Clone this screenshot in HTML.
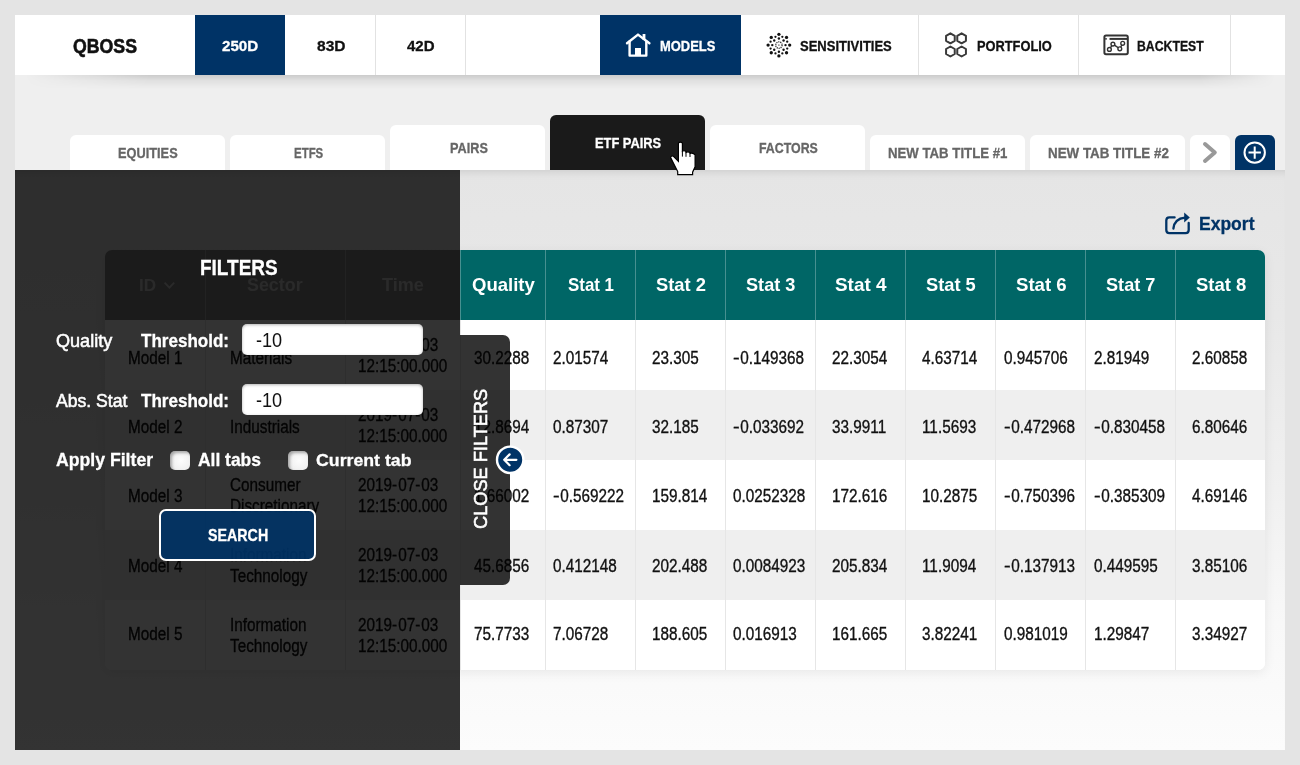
<!DOCTYPE html>
<html><head><meta charset="utf-8"><title>QBOSS</title>
<style>
html,body{margin:0;padding:0;}
body{width:1300px;height:765px;overflow:hidden;background:#e4e4e4;position:relative;font-family:"Liberation Sans",sans-serif;}
.b{position:absolute;}
.t{position:absolute;white-space:pre;transform-origin:0 0;font-family:"Liberation Sans",sans-serif;}
</style></head><body>
<div class="b" style="left:15px;top:15px;width:1270px;height:735px;background:#efefef;"></div>
<div class="b" style="left:15px;top:170px;width:1270px;height:580px;background:linear-gradient(to bottom,#e5e5e5 0%,#e8e8e8 25%,#f0f0f0 55%,#f8f8f8 78%,#fcfcfc 100%);box-shadow:inset 0 9px 10px -8px rgba(0,0,0,0.13);"></div>
<div class="b" style="left:25px;top:75px;width:1255px;height:14px;background:linear-gradient(to bottom,rgba(0,0,0,0.15),rgba(0,0,0,0.06) 40%,rgba(0,0,0,0));-webkit-mask-image:linear-gradient(to right,transparent 0,#000 125px,#000 1175px,transparent 1250px);"></div>
<div class="b" style="left:15px;top:15px;width:1270px;height:60px;background:#fff;"></div>
<div class="b" style="left:375px;top:15px;width:1px;height:60px;background:#e2e2e2;"></div>
<div class="b" style="left:465px;top:15px;width:1px;height:60px;background:#e2e2e2;"></div>
<div class="b" style="left:918px;top:15px;width:1px;height:60px;background:#e2e2e2;"></div>
<div class="b" style="left:1078px;top:15px;width:1px;height:60px;background:#e2e2e2;"></div>
<div class="b" style="left:1230px;top:15px;width:1px;height:60px;background:#e2e2e2;"></div>
<div class="b" style="left:195px;top:15px;width:90px;height:60px;background:#003366;"></div>
<div class="b" style="left:600px;top:15px;width:141px;height:60px;background:#003366;"></div>
<span class="t" style="left:73.30px;top:36px;font-size:20.20px;line-height:20.20px;font-weight:bold;-webkit-text-stroke:0.3px #111;color:#111;transform:scaleX(0.8770);-webkit-text-stroke:0.6px #111;">QBOSS</span>
<span class="t" style="left:222.20px;top:38px;font-size:15.12px;line-height:15.12px;font-weight:bold;-webkit-text-stroke:0.3px #fff;color:#fff;transform:scaleX(1.0016);">250D</span>
<span class="t" style="left:316.50px;top:38px;font-size:15.12px;line-height:15.12px;font-weight:bold;-webkit-text-stroke:0.3px #111;color:#111;transform:scaleX(1.0280);">83D</span>
<span class="t" style="left:406.80px;top:38px;font-size:15.12px;line-height:15.12px;font-weight:bold;-webkit-text-stroke:0.3px #111;color:#111;transform:scaleX(0.9956);">42D</span>
<span class="t" style="left:659.60px;top:39px;font-size:14.53px;line-height:14.53px;font-weight:bold;-webkit-text-stroke:0.3px #fff;color:#fff;transform:scaleX(0.8910);">MODELS</span>
<span class="t" style="left:800.00px;top:39px;font-size:14.53px;line-height:14.53px;font-weight:bold;-webkit-text-stroke:0.3px #111;color:#111;transform:scaleX(0.8960);">SENSITIVITIES</span>
<span class="t" style="left:977.40px;top:39px;font-size:14.53px;line-height:14.53px;font-weight:bold;-webkit-text-stroke:0.3px #111;color:#111;transform:scaleX(0.8834);">PORTFOLIO</span>
<span class="t" style="left:1137.00px;top:39px;font-size:14.53px;line-height:14.53px;font-weight:bold;-webkit-text-stroke:0.3px #111;color:#111;transform:scaleX(0.8442);">BACKTEST</span>
<svg class="b" style="left:620px;top:28px" width="40" height="34" viewBox="620 28 40 34">
<g fill="none" stroke="#fff" stroke-width="2.4" stroke-linejoin="round" stroke-linecap="round">
<path d="M627 43.2 L638 34.6 L649.4 43.2"/>
<path d="M629.6 41.5 V55.6 H646.3 V41.5"/>
</g>
<rect x="635" y="48" width="6" height="8" fill="#fff"/>
<rect x="642.6" y="34" width="2.8" height="6" fill="#fff"/>
</svg>
<svg class="b" style="left:760px;top:28px" width="38" height="36" viewBox="760 28 38 36"><g fill="#111"><circle cx="778.90" cy="34.30" r="1.65"/><circle cx="782.34" cy="36.79" r="1.15"/><circle cx="778.90" cy="38.50" r="1.20"/><circle cx="786.54" cy="37.46" r="1.65"/><circle cx="787.21" cy="41.66" r="1.15"/><circle cx="783.57" cy="40.43" r="1.20"/><circle cx="789.70" cy="45.10" r="1.65"/><circle cx="787.21" cy="48.54" r="1.15"/><circle cx="785.50" cy="45.10" r="1.20"/><circle cx="786.54" cy="52.74" r="1.65"/><circle cx="782.34" cy="53.41" r="1.15"/><circle cx="783.57" cy="49.77" r="1.20"/><circle cx="778.90" cy="55.90" r="1.65"/><circle cx="775.46" cy="53.41" r="1.15"/><circle cx="778.90" cy="51.70" r="1.20"/><circle cx="771.26" cy="52.74" r="1.65"/><circle cx="770.59" cy="48.54" r="1.15"/><circle cx="774.23" cy="49.77" r="1.20"/><circle cx="768.10" cy="45.10" r="1.65"/><circle cx="770.59" cy="41.66" r="1.15"/><circle cx="772.30" cy="45.10" r="1.20"/><circle cx="771.26" cy="37.46" r="1.65"/><circle cx="775.46" cy="36.79" r="1.15"/><circle cx="774.23" cy="40.43" r="1.20"/></g><circle cx="778.9" cy="45.1" r="3.2" fill="none" stroke="#333" stroke-width="1.3" stroke-dasharray="1.2 0.8"/><circle cx="778.9" cy="45.1" r="0.9" fill="#888"/></svg>
<svg class="b" style="left:938px;top:28px" width="34" height="34" viewBox="938 28 34 34"><g fill="none" stroke="#3a3a3a" stroke-width="2" stroke-linejoin="round"><polygon points="950.40,33.30 954.73,35.80 954.73,40.80 950.40,43.30 946.07,40.80 946.07,35.80"/><polygon points="950.40,46.50 954.73,49.00 954.73,54.00 950.40,56.50 946.07,54.00 946.07,49.00"/><polygon points="961.60,33.30 965.93,35.80 965.93,40.80 961.60,43.30 957.27,40.80 957.27,35.80"/><polygon points="961.60,46.50 965.93,49.00 965.93,54.00 961.60,56.50 957.27,54.00 957.27,49.00"/></g></svg>
<svg class="b" style="left:1100px;top:30px" width="34" height="30" viewBox="1100 30 34 30">
<g fill="none" stroke="#333" stroke-width="2">
<rect x="1104.4" y="35.6" width="23.4" height="18.6" rx="1.6"/>
<path d="M1109.5 38.9 H1127"/>
<path d="M1109.4 49.4 L1112.9 44.1 L1119.8 48.8 L1122.7 43.3" stroke-width="1.4"/>
</g>
<path d="M1105 38.9 H1107" stroke="#333" stroke-width="1.4"/>
<g fill="#fff" stroke="#333" stroke-width="1.4">
<circle cx="1109.4" cy="49.4" r="1.9"/><circle cx="1112.9" cy="44.1" r="1.9"/><circle cx="1119.8" cy="48.8" r="1.9"/><circle cx="1122.7" cy="43.3" r="1.9"/>
</g>
</svg>
<div class="b" style="left:70px;top:135px;width:155px;height:35px;background:#fff;border-radius:6px 6px 0 0;"></div>
<span class="t" style="left:118.00px;top:146px;font-size:14.24px;line-height:14.24px;font-weight:bold;-webkit-text-stroke:0.3px #666;color:#666;transform:scaleX(0.8979);">EQUITIES</span>
<div class="b" style="left:230px;top:135px;width:155px;height:35px;background:#fff;border-radius:6px 6px 0 0;"></div>
<span class="t" style="left:293.80px;top:147px;font-size:13.95px;line-height:13.95px;font-weight:bold;-webkit-text-stroke:0.3px #666;color:#666;transform:scaleX(0.8215);">ETFS</span>
<div class="b" style="left:390px;top:125px;width:155px;height:45px;background:#fff;border-radius:6px 6px 0 0;"></div>
<span class="t" style="left:449.50px;top:141px;font-size:14.53px;line-height:14.53px;font-weight:bold;-webkit-text-stroke:0.3px #666;color:#666;transform:scaleX(0.8744);">PAIRS</span>
<div class="b" style="left:550px;top:115px;width:155px;height:55px;background:#1a1a1a;border-radius:6px 6px 0 0;"></div>
<span class="t" style="left:595.40px;top:136px;font-size:14.53px;line-height:14.53px;font-weight:bold;-webkit-text-stroke:0.3px #fff;color:#fff;transform:scaleX(0.8847);">ETF PAIRS</span>
<div class="b" style="left:710px;top:125px;width:155px;height:45px;background:#fff;border-radius:6px 6px 0 0;"></div>
<span class="t" style="left:759.10px;top:141px;font-size:14.39px;line-height:14.39px;font-weight:bold;-webkit-text-stroke:0.3px #666;color:#666;transform:scaleX(0.8599);">FACTORS</span>
<div class="b" style="left:870px;top:135px;width:155px;height:35px;background:#fff;border-radius:6px 6px 0 0;"></div>
<span class="t" style="left:888.10px;top:146px;font-size:14.39px;line-height:14.39px;font-weight:bold;-webkit-text-stroke:0.3px #666;color:#666;transform:scaleX(0.9190);">NEW TAB TITLE #1</span>
<div class="b" style="left:1030px;top:135px;width:155px;height:35px;background:#fff;border-radius:6px 6px 0 0;"></div>
<span class="t" style="left:1048.00px;top:146px;font-size:14.53px;line-height:14.53px;font-weight:bold;-webkit-text-stroke:0.3px #666;color:#666;transform:scaleX(0.9212);">NEW TAB TITLE #2</span>
<div class="b" style="left:1190px;top:135px;width:40px;height:35px;background:#fff;border-radius:6px 6px 0 0;"></div>
<svg class="b" style="left:1195px;top:138px" width="30" height="30" viewBox="1195 138 30 30"><path d="M1205 144 L1214.8 152.5 L1205 161" fill="none" stroke="#999" stroke-width="4" stroke-linejoin="round" stroke-linecap="round"/></svg>
<div class="b" style="left:1235px;top:135px;width:40px;height:35px;background:#003366;border-radius:6px 6px 0 0;"></div>
<svg class="b" style="left:1235px;top:135px" width="40" height="35" viewBox="1235 135 40 35"><g fill="none" stroke="#fff" stroke-width="2"><circle cx="1254.7" cy="152.6" r="10.2"/><path d="M1248.5 152.6 H1260.9 M1254.7 146.4 V158.8"/></g></svg>
<svg class="b" style="left:1160px;top:208px" width="35" height="32" viewBox="1160 208 35 32">
<g fill="none" stroke="#003366" stroke-width="2.3" stroke-linecap="round">
<path d="M1174.6 217.4 H1169.4 Q1166.3 217.4 1166.3 220.5 V230 Q1166.3 233.1 1169.4 233.1 H1185.6 Q1188.7 233.1 1188.7 230 V223"/>
<path d="M1173.4 228.5 Q1174.5 218.5 1185 217.6"/>
</g>
<path d="M1184.2 212.6 L1189.8 217.6 L1184.2 222.4 Z" fill="#003366"/>
</svg>
<span class="t" style="left:1198.50px;top:215px;font-size:18.17px;line-height:18.17px;font-weight:bold;-webkit-text-stroke:0.3px #003366;color:#003366;transform:scaleX(0.9645);">Export</span>
<div class="b" style="left:105px;top:250px;width:1160px;height:420px;background:#fff;border-radius:7px;box-shadow:0 3px 12px rgba(0,0,0,0.07);overflow:hidden;"></div>
<div class="b" style="left:105px;top:250px;width:355px;height:70px;background:#878787;border-radius:7px 0 0 0;"></div>
<div class="b" style="left:460px;top:250px;width:805px;height:70px;background:#006666;border-radius:0 7px 0 0;"></div>
<div class="b" style="left:105px;top:390px;width:1160px;height:70px;background:#efefef;"></div>
<div class="b" style="left:105px;top:530px;width:1160px;height:70px;background:#efefef;"></div>
<div class="b" style="left:105px;top:600px;width:1160px;height:70px;background:#fff;border-radius:0 0 7px 7px;"></div>
<div class="b" style="left:205px;top:250px;width:1px;height:70px;background:rgba(255,255,255,0.28);"></div>
<div class="b" style="left:205px;top:320px;width:1px;height:350px;background:#e6e6e6;"></div>
<div class="b" style="left:345px;top:250px;width:1px;height:70px;background:rgba(255,255,255,0.28);"></div>
<div class="b" style="left:345px;top:320px;width:1px;height:350px;background:#e6e6e6;"></div>
<div class="b" style="left:460px;top:250px;width:1px;height:70px;background:rgba(255,255,255,0.28);"></div>
<div class="b" style="left:460px;top:320px;width:1px;height:350px;background:#e6e6e6;"></div>
<div class="b" style="left:545px;top:250px;width:1px;height:70px;background:rgba(255,255,255,0.28);"></div>
<div class="b" style="left:545px;top:320px;width:1px;height:350px;background:#e6e6e6;"></div>
<div class="b" style="left:635px;top:250px;width:1px;height:70px;background:rgba(255,255,255,0.28);"></div>
<div class="b" style="left:635px;top:320px;width:1px;height:350px;background:#e6e6e6;"></div>
<div class="b" style="left:725px;top:250px;width:1px;height:70px;background:rgba(255,255,255,0.28);"></div>
<div class="b" style="left:725px;top:320px;width:1px;height:350px;background:#e6e6e6;"></div>
<div class="b" style="left:815px;top:250px;width:1px;height:70px;background:rgba(255,255,255,0.28);"></div>
<div class="b" style="left:815px;top:320px;width:1px;height:350px;background:#e6e6e6;"></div>
<div class="b" style="left:905px;top:250px;width:1px;height:70px;background:rgba(255,255,255,0.28);"></div>
<div class="b" style="left:905px;top:320px;width:1px;height:350px;background:#e6e6e6;"></div>
<div class="b" style="left:995px;top:250px;width:1px;height:70px;background:rgba(255,255,255,0.28);"></div>
<div class="b" style="left:995px;top:320px;width:1px;height:350px;background:#e6e6e6;"></div>
<div class="b" style="left:1085px;top:250px;width:1px;height:70px;background:rgba(255,255,255,0.28);"></div>
<div class="b" style="left:1085px;top:320px;width:1px;height:350px;background:#e6e6e6;"></div>
<div class="b" style="left:1175px;top:250px;width:1px;height:70px;background:rgba(255,255,255,0.28);"></div>
<div class="b" style="left:1175px;top:320px;width:1px;height:350px;background:#e6e6e6;"></div>
<span class="t" style="left:138.80px;top:277px;font-size:17.01px;line-height:17.01px;font-weight:bold;color:#d0d0d0;transform:scaleX(1.0055);">ID</span>
<svg class="b" style="left:160px;top:278px" width="18" height="14" viewBox="160 278 18 14"><path d="M164.6 282.6 L169.4 287.6 L174.2 282.6" fill="none" stroke="#d0d0d0" stroke-width="1.8"/></svg>
<span class="t" style="left:247.30px;top:277px;font-size:17.59px;line-height:17.59px;font-weight:bold;color:#d0d0d0;transform:scaleX(1.0159);">Sector</span>
<span class="t" style="left:381.50px;top:277px;font-size:17.59px;line-height:17.59px;font-weight:bold;color:#d0d0d0;transform:scaleX(1.0262);">Time</span>
<span class="t" style="left:471.80px;top:277px;font-size:17.59px;line-height:17.59px;font-weight:bold;color:#fff;transform:scaleX(1.0550);">Quality</span>
<span class="t" style="left:568.00px;top:277px;font-size:17.59px;line-height:17.59px;font-weight:bold;color:#fff;transform:scaleX(0.9605);">Stat 1</span>
<span class="t" style="left:656.00px;top:277px;font-size:17.59px;line-height:17.59px;font-weight:bold;color:#fff;transform:scaleX(1.0441);">Stat 2</span>
<span class="t" style="left:746.00px;top:277px;font-size:17.59px;line-height:17.59px;font-weight:bold;color:#fff;transform:scaleX(1.0315);">Stat 3</span>
<span class="t" style="left:835.30px;top:277px;font-size:17.59px;line-height:17.59px;font-weight:bold;color:#fff;transform:scaleX(1.0754);">Stat 4</span>
<span class="t" style="left:926.20px;top:277px;font-size:17.59px;line-height:17.59px;font-weight:bold;color:#fff;transform:scaleX(1.0399);">Stat 5</span>
<span class="t" style="left:1015.70px;top:277px;font-size:17.59px;line-height:17.59px;font-weight:bold;color:#fff;transform:scaleX(1.0587);">Stat 6</span>
<span class="t" style="left:1106.20px;top:277px;font-size:17.59px;line-height:17.59px;font-weight:bold;color:#fff;transform:scaleX(1.0315);">Stat 7</span>
<span class="t" style="left:1195.70px;top:277px;font-size:17.59px;line-height:17.59px;font-weight:bold;color:#fff;transform:scaleX(1.0503);">Stat 8</span>
<span class="t" style="left:473.80px;top:349px;font-size:18.0px;line-height:18.0px;color:#111;-webkit-text-stroke:0.35px #111;transform:scaleX(0.850)">30.2288</span>
<span class="t" style="left:553.30px;top:349px;font-size:18.0px;line-height:18.0px;color:#111;-webkit-text-stroke:0.35px #111;transform:scaleX(0.850)">2.01574</span>
<span class="t" style="left:652.00px;top:349px;font-size:18.0px;line-height:18.0px;color:#111;-webkit-text-stroke:0.35px #111;transform:scaleX(0.850)">23.305</span>
<span class="t" style="left:733.00px;top:349px;font-size:18.0px;line-height:18.0px;color:#111;-webkit-text-stroke:0.35px #111;transform:scaleX(0.850)"><span style="display:inline-block;width:8.5px;transform:scaleX(1.3);transform-origin:0 0">-</span>0.149368</span>
<span class="t" style="left:831.80px;top:349px;font-size:18.0px;line-height:18.0px;color:#111;-webkit-text-stroke:0.35px #111;transform:scaleX(0.850)">22.3054</span>
<span class="t" style="left:921.60px;top:349px;font-size:18.0px;line-height:18.0px;color:#111;-webkit-text-stroke:0.35px #111;transform:scaleX(0.850)">4.63714</span>
<span class="t" style="left:1003.60px;top:349px;font-size:18.0px;line-height:18.0px;color:#111;-webkit-text-stroke:0.35px #111;transform:scaleX(0.850)">0.945706</span>
<span class="t" style="left:1094.00px;top:349px;font-size:18.0px;line-height:18.0px;color:#111;-webkit-text-stroke:0.35px #111;transform:scaleX(0.850)">2.81949</span>
<span class="t" style="left:1192.00px;top:349px;font-size:18.0px;line-height:18.0px;color:#111;-webkit-text-stroke:0.35px #111;transform:scaleX(0.850)">2.60858</span>
<span class="t" style="left:473.80px;top:418px;font-size:18.0px;line-height:18.0px;color:#111;-webkit-text-stroke:0.35px #111;transform:scaleX(0.850)">12.8694</span>
<span class="t" style="left:553.30px;top:418px;font-size:18.0px;line-height:18.0px;color:#111;-webkit-text-stroke:0.35px #111;transform:scaleX(0.850)">0.87307</span>
<span class="t" style="left:652.00px;top:418px;font-size:18.0px;line-height:18.0px;color:#111;-webkit-text-stroke:0.35px #111;transform:scaleX(0.850)">32.185</span>
<span class="t" style="left:733.00px;top:418px;font-size:18.0px;line-height:18.0px;color:#111;-webkit-text-stroke:0.35px #111;transform:scaleX(0.850)"><span style="display:inline-block;width:8.5px;transform:scaleX(1.3);transform-origin:0 0">-</span>0.033692</span>
<span class="t" style="left:831.80px;top:418px;font-size:18.0px;line-height:18.0px;color:#111;-webkit-text-stroke:0.35px #111;transform:scaleX(0.850)">33.9911</span>
<span class="t" style="left:921.60px;top:418px;font-size:18.0px;line-height:18.0px;color:#111;-webkit-text-stroke:0.35px #111;transform:scaleX(0.850)">11.5693</span>
<span class="t" style="left:1003.60px;top:418px;font-size:18.0px;line-height:18.0px;color:#111;-webkit-text-stroke:0.35px #111;transform:scaleX(0.850)"><span style="display:inline-block;width:8.5px;transform:scaleX(1.3);transform-origin:0 0">-</span>0.472968</span>
<span class="t" style="left:1094.00px;top:418px;font-size:18.0px;line-height:18.0px;color:#111;-webkit-text-stroke:0.35px #111;transform:scaleX(0.850)"><span style="display:inline-block;width:8.5px;transform:scaleX(1.3);transform-origin:0 0">-</span>0.830458</span>
<span class="t" style="left:1192.00px;top:418px;font-size:18.0px;line-height:18.0px;color:#111;-webkit-text-stroke:0.35px #111;transform:scaleX(0.850)">6.80646</span>
<span class="t" style="left:473.80px;top:487px;font-size:18.0px;line-height:18.0px;color:#111;-webkit-text-stroke:0.35px #111;transform:scaleX(0.850)">1.66002</span>
<span class="t" style="left:553.30px;top:487px;font-size:18.0px;line-height:18.0px;color:#111;-webkit-text-stroke:0.35px #111;transform:scaleX(0.850)"><span style="display:inline-block;width:8.5px;transform:scaleX(1.3);transform-origin:0 0">-</span>0.569222</span>
<span class="t" style="left:652.00px;top:487px;font-size:18.0px;line-height:18.0px;color:#111;-webkit-text-stroke:0.35px #111;transform:scaleX(0.850)">159.814</span>
<span class="t" style="left:733.00px;top:487px;font-size:18.0px;line-height:18.0px;color:#111;-webkit-text-stroke:0.35px #111;transform:scaleX(0.850)">0.0252328</span>
<span class="t" style="left:831.80px;top:487px;font-size:18.0px;line-height:18.0px;color:#111;-webkit-text-stroke:0.35px #111;transform:scaleX(0.850)">172.616</span>
<span class="t" style="left:921.60px;top:487px;font-size:18.0px;line-height:18.0px;color:#111;-webkit-text-stroke:0.35px #111;transform:scaleX(0.850)">10.2875</span>
<span class="t" style="left:1003.60px;top:487px;font-size:18.0px;line-height:18.0px;color:#111;-webkit-text-stroke:0.35px #111;transform:scaleX(0.850)"><span style="display:inline-block;width:8.5px;transform:scaleX(1.3);transform-origin:0 0">-</span>0.750396</span>
<span class="t" style="left:1094.00px;top:487px;font-size:18.0px;line-height:18.0px;color:#111;-webkit-text-stroke:0.35px #111;transform:scaleX(0.850)"><span style="display:inline-block;width:8.5px;transform:scaleX(1.3);transform-origin:0 0">-</span>0.385309</span>
<span class="t" style="left:1192.00px;top:487px;font-size:18.0px;line-height:18.0px;color:#111;-webkit-text-stroke:0.35px #111;transform:scaleX(0.850)">4.69146</span>
<span class="t" style="left:473.80px;top:557px;font-size:18.0px;line-height:18.0px;color:#111;-webkit-text-stroke:0.35px #111;transform:scaleX(0.850)">45.6856</span>
<span class="t" style="left:553.30px;top:557px;font-size:18.0px;line-height:18.0px;color:#111;-webkit-text-stroke:0.35px #111;transform:scaleX(0.850)">0.412148</span>
<span class="t" style="left:652.00px;top:557px;font-size:18.0px;line-height:18.0px;color:#111;-webkit-text-stroke:0.35px #111;transform:scaleX(0.850)">202.488</span>
<span class="t" style="left:733.00px;top:557px;font-size:18.0px;line-height:18.0px;color:#111;-webkit-text-stroke:0.35px #111;transform:scaleX(0.850)">0.0084923</span>
<span class="t" style="left:831.80px;top:557px;font-size:18.0px;line-height:18.0px;color:#111;-webkit-text-stroke:0.35px #111;transform:scaleX(0.850)">205.834</span>
<span class="t" style="left:921.60px;top:557px;font-size:18.0px;line-height:18.0px;color:#111;-webkit-text-stroke:0.35px #111;transform:scaleX(0.850)">11.9094</span>
<span class="t" style="left:1003.60px;top:557px;font-size:18.0px;line-height:18.0px;color:#111;-webkit-text-stroke:0.35px #111;transform:scaleX(0.850)"><span style="display:inline-block;width:8.5px;transform:scaleX(1.3);transform-origin:0 0">-</span>0.137913</span>
<span class="t" style="left:1094.00px;top:557px;font-size:18.0px;line-height:18.0px;color:#111;-webkit-text-stroke:0.35px #111;transform:scaleX(0.850)">0.449595</span>
<span class="t" style="left:1192.00px;top:557px;font-size:18.0px;line-height:18.0px;color:#111;-webkit-text-stroke:0.35px #111;transform:scaleX(0.850)">3.85106</span>
<span class="t" style="left:473.80px;top:625px;font-size:18.0px;line-height:18.0px;color:#111;-webkit-text-stroke:0.35px #111;transform:scaleX(0.850)">75.7733</span>
<span class="t" style="left:553.30px;top:625px;font-size:18.0px;line-height:18.0px;color:#111;-webkit-text-stroke:0.35px #111;transform:scaleX(0.850)">7.06728</span>
<span class="t" style="left:652.00px;top:625px;font-size:18.0px;line-height:18.0px;color:#111;-webkit-text-stroke:0.35px #111;transform:scaleX(0.850)">188.605</span>
<span class="t" style="left:733.00px;top:625px;font-size:18.0px;line-height:18.0px;color:#111;-webkit-text-stroke:0.35px #111;transform:scaleX(0.850)">0.016913</span>
<span class="t" style="left:831.80px;top:625px;font-size:18.0px;line-height:18.0px;color:#111;-webkit-text-stroke:0.35px #111;transform:scaleX(0.850)">161.665</span>
<span class="t" style="left:921.60px;top:625px;font-size:18.0px;line-height:18.0px;color:#111;-webkit-text-stroke:0.35px #111;transform:scaleX(0.850)">3.82241</span>
<span class="t" style="left:1003.60px;top:625px;font-size:18.0px;line-height:18.0px;color:#111;-webkit-text-stroke:0.35px #111;transform:scaleX(0.850)">0.981019</span>
<span class="t" style="left:1094.00px;top:625px;font-size:18.0px;line-height:18.0px;color:#111;-webkit-text-stroke:0.35px #111;transform:scaleX(0.850)">1.29847</span>
<span class="t" style="left:1192.00px;top:625px;font-size:18.0px;line-height:18.0px;color:#111;-webkit-text-stroke:0.35px #111;transform:scaleX(0.850)">3.34927</span>
<span class="t" style="left:128.30px;top:349px;font-size:18.0px;line-height:18.0px;color:#111;-webkit-text-stroke:0.35px #111;transform:scaleX(0.850)">Model 1</span>
<span class="t" style="left:128.30px;top:418px;font-size:18.0px;line-height:18.0px;color:#111;-webkit-text-stroke:0.35px #111;transform:scaleX(0.850)">Model 2</span>
<span class="t" style="left:128.30px;top:487px;font-size:18.0px;line-height:18.0px;color:#111;-webkit-text-stroke:0.35px #111;transform:scaleX(0.850)">Model 3</span>
<span class="t" style="left:128.30px;top:557px;font-size:18.0px;line-height:18.0px;color:#111;-webkit-text-stroke:0.35px #111;transform:scaleX(0.850)">Model 4</span>
<span class="t" style="left:128.30px;top:625px;font-size:18.0px;line-height:18.0px;color:#111;-webkit-text-stroke:0.35px #111;transform:scaleX(0.850)">Model 5</span>
<span class="t" style="left:230.00px;top:349px;font-size:18.0px;line-height:18.0px;color:#111;-webkit-text-stroke:0.35px #111;transform:scaleX(0.850)">Materials</span>
<span class="t" style="left:230.00px;top:418px;font-size:18.0px;line-height:18.0px;color:#111;-webkit-text-stroke:0.35px #111;transform:scaleX(0.850)">Industrials</span>
<span class="t" style="left:230.00px;top:476px;font-size:18.0px;line-height:18.0px;color:#111;-webkit-text-stroke:0.35px #111;transform:scaleX(0.850)">Consumer</span>
<span class="t" style="left:230.00px;top:497px;font-size:18.0px;line-height:18.0px;color:#111;-webkit-text-stroke:0.35px #111;transform:scaleX(0.850)">Discretionary</span>
<span class="t" style="left:230.00px;top:546px;font-size:18.0px;line-height:18.0px;color:#111;-webkit-text-stroke:0.35px #111;transform:scaleX(0.850)">Information</span>
<span class="t" style="left:230.00px;top:567px;font-size:18.0px;line-height:18.0px;color:#111;-webkit-text-stroke:0.35px #111;transform:scaleX(0.850)">Technology</span>
<span class="t" style="left:230.00px;top:616px;font-size:18.0px;line-height:18.0px;color:#111;-webkit-text-stroke:0.35px #111;transform:scaleX(0.850)">Information</span>
<span class="t" style="left:230.00px;top:637px;font-size:18.0px;line-height:18.0px;color:#111;-webkit-text-stroke:0.35px #111;transform:scaleX(0.850)">Technology</span>
<span class="t" style="left:357.60px;top:336px;font-size:18.0px;line-height:18.0px;color:#111;-webkit-text-stroke:0.35px #111;transform:scaleX(0.850)">2019<span style="letter-spacing:1.2px">-</span>07<span style="letter-spacing:1.2px">-</span>03</span>
<span class="t" style="left:357.60px;top:357px;font-size:18.0px;line-height:18.0px;color:#111;-webkit-text-stroke:0.35px #111;transform:scaleX(0.850)">12:15:00.000</span>
<span class="t" style="left:357.60px;top:406px;font-size:18.0px;line-height:18.0px;color:#111;-webkit-text-stroke:0.35px #111;transform:scaleX(0.850)">2019<span style="letter-spacing:1.2px">-</span>07<span style="letter-spacing:1.2px">-</span>03</span>
<span class="t" style="left:357.60px;top:427px;font-size:18.0px;line-height:18.0px;color:#111;-webkit-text-stroke:0.35px #111;transform:scaleX(0.850)">12:15:00.000</span>
<span class="t" style="left:357.60px;top:476px;font-size:18.0px;line-height:18.0px;color:#111;-webkit-text-stroke:0.35px #111;transform:scaleX(0.850)">2019<span style="letter-spacing:1.2px">-</span>07<span style="letter-spacing:1.2px">-</span>03</span>
<span class="t" style="left:357.60px;top:497px;font-size:18.0px;line-height:18.0px;color:#111;-webkit-text-stroke:0.35px #111;transform:scaleX(0.850)">12:15:00.000</span>
<span class="t" style="left:357.60px;top:546px;font-size:18.0px;line-height:18.0px;color:#111;-webkit-text-stroke:0.35px #111;transform:scaleX(0.850)">2019<span style="letter-spacing:1.2px">-</span>07<span style="letter-spacing:1.2px">-</span>03</span>
<span class="t" style="left:357.60px;top:567px;font-size:18.0px;line-height:18.0px;color:#111;-webkit-text-stroke:0.35px #111;transform:scaleX(0.850)">12:15:00.000</span>
<span class="t" style="left:357.60px;top:616px;font-size:18.0px;line-height:18.0px;color:#111;-webkit-text-stroke:0.35px #111;transform:scaleX(0.850)">2019<span style="letter-spacing:1.2px">-</span>07<span style="letter-spacing:1.2px">-</span>03</span>
<span class="t" style="left:357.60px;top:637px;font-size:18.0px;line-height:18.0px;color:#111;-webkit-text-stroke:0.35px #111;transform:scaleX(0.850)">12:15:00.000</span>
<div class="b" style="left:15px;top:170px;width:445px;height:580px;background:rgba(0,0,0,0.8);"></div>
<span class="t" style="left:199.60px;top:257px;font-size:22.53px;line-height:22.53px;font-weight:bold;-webkit-text-stroke:0.3px #fff;color:#fff;transform:scaleX(0.8428);">FILTERS</span>
<span class="t" style="left:55.80px;top:332px;font-size:18.60px;line-height:18.60px;color:#fff;transform:scaleX(0.9724);-webkit-text-stroke:0.55px #fff;">Quality</span>
<span class="t" style="left:141.40px;top:332px;font-size:18.60px;line-height:18.60px;font-weight:bold;-webkit-text-stroke:0.3px #fff;color:#fff;transform:scaleX(0.9165);">Threshold:</span>
<div class="b" style="left:242px;top:324px;width:181px;height:31px;background:#fff;border-radius:5px;box-shadow:inset 0 1px 3px rgba(0,0,0,0.3);"></div>
<span class="t" style="left:255.80px;top:331px;font-size:19.33px;line-height:19.33px;color:#111;transform:scaleX(0.9379);">-10</span>
<span class="t" style="left:56.10px;top:392px;font-size:18.17px;line-height:18.17px;color:#fff;transform:scaleX(0.9684);-webkit-text-stroke:0.55px #fff;">Abs. Stat</span>
<span class="t" style="left:141.40px;top:392px;font-size:18.17px;line-height:18.17px;font-weight:bold;-webkit-text-stroke:0.3px #fff;color:#fff;transform:scaleX(0.9385);">Threshold:</span>
<div class="b" style="left:242px;top:384px;width:181px;height:31px;background:#fff;border-radius:5px;box-shadow:inset 0 1px 3px rgba(0,0,0,0.3);"></div>
<span class="t" style="left:255.80px;top:391px;font-size:19.33px;line-height:19.33px;color:#111;transform:scaleX(0.9379);">-10</span>
<span class="t" style="left:56.20px;top:452px;font-size:17.88px;line-height:17.88px;font-weight:bold;-webkit-text-stroke:0.3px #fff;color:#fff;transform:scaleX(0.9883);">Apply Filter</span>
<div class="b" style="left:170px;top:451px;width:20px;height:19px;background:radial-gradient(circle at 55% 50%,#fdfdfd 0%,#f0f0f0 70%,#e6e6e6 100%);border-radius:5px;box-shadow:inset 2px 2px 3px rgba(0,0,0,0.3);"></div>
<span class="t" style="left:198.00px;top:452px;font-size:17.59px;line-height:17.59px;font-weight:bold;-webkit-text-stroke:0.3px #fff;color:#fff;transform:scaleX(0.9917);">All tabs</span>
<div class="b" style="left:288px;top:451px;width:20px;height:19px;background:radial-gradient(circle at 55% 50%,#fdfdfd 0%,#f0f0f0 70%,#e6e6e6 100%);border-radius:5px;box-shadow:inset 2px 2px 3px rgba(0,0,0,0.3);"></div>
<span class="t" style="left:316.20px;top:452px;font-size:17.30px;line-height:17.30px;font-weight:bold;-webkit-text-stroke:0.3px #fff;color:#fff;transform:scaleX(1.0256);">Current tab</span>
<div class="b" style="left:159px;top:509px;width:157px;height:52px;background:rgba(0,51,102,0.9);border:2px solid #fff;border-radius:7px;box-sizing:border-box;"></div>
<span class="t" style="left:208.20px;top:527px;font-size:17.01px;line-height:17.01px;font-weight:bold;-webkit-text-stroke:0.3px #fff;color:#fff;transform:scaleX(0.8383);">SEARCH</span>
<div class="b" style="left:460px;top:335px;width:50px;height:250px;background:rgba(0,0,0,0.8);border-radius:0 7px 7px 0;"></div>
<div class="b" style="left:486.5px;top:529px;transform:rotate(-90deg);transform-origin:0 0;"><span class="t" style="left:-0.00px;top:-16.09px;font-size:19.0px;line-height:19.0px;color:#fff;transform:scaleX(0.9576);-webkit-text-stroke:0.6px #fff;">CLOSE FILTERS</span></div>
<svg class="b" style="left:492px;top:442px" width="36" height="36" viewBox="492 442 36 36">
<circle cx="510.2" cy="459.8" r="13.2" fill="#003366" stroke="#fff" stroke-width="2.4"/>
<g fill="none" stroke="#fff" stroke-width="2.2" stroke-linecap="round" stroke-linejoin="round">
<path d="M504.2 459.8 H516.4 M509.6 454.4 L504.2 459.8 L509.6 465.2"/>
</g></svg>
<svg class="b" style="left:666px;top:138px" width="34" height="40" viewBox="666 138 34 40">
<path d="M678.4 143.2 Q680.4 141.2 682.4 143.2 L682.4 151.2 Q684.2 150.2 686 151.5 L686 152.4 Q688 151.2 690 152.6 L690 153.4 Q693.2 152.4 695.1 155 L695.1 166.8 L692.6 172.2 L692.6 174.6 L677.7 174.6 L677.7 171.6 L670.6 157.6 Q670.9 155.5 673.2 156.2 L678.4 161.4 Z" fill="#fff" stroke="#000" stroke-width="1.2" stroke-linejoin="miter"/>
<path d="M682.4 151.2 V156.6 M686 152.4 V156.8 M690 153.4 V157" stroke="#000" stroke-width="1"/>
</svg>
</body></html>
